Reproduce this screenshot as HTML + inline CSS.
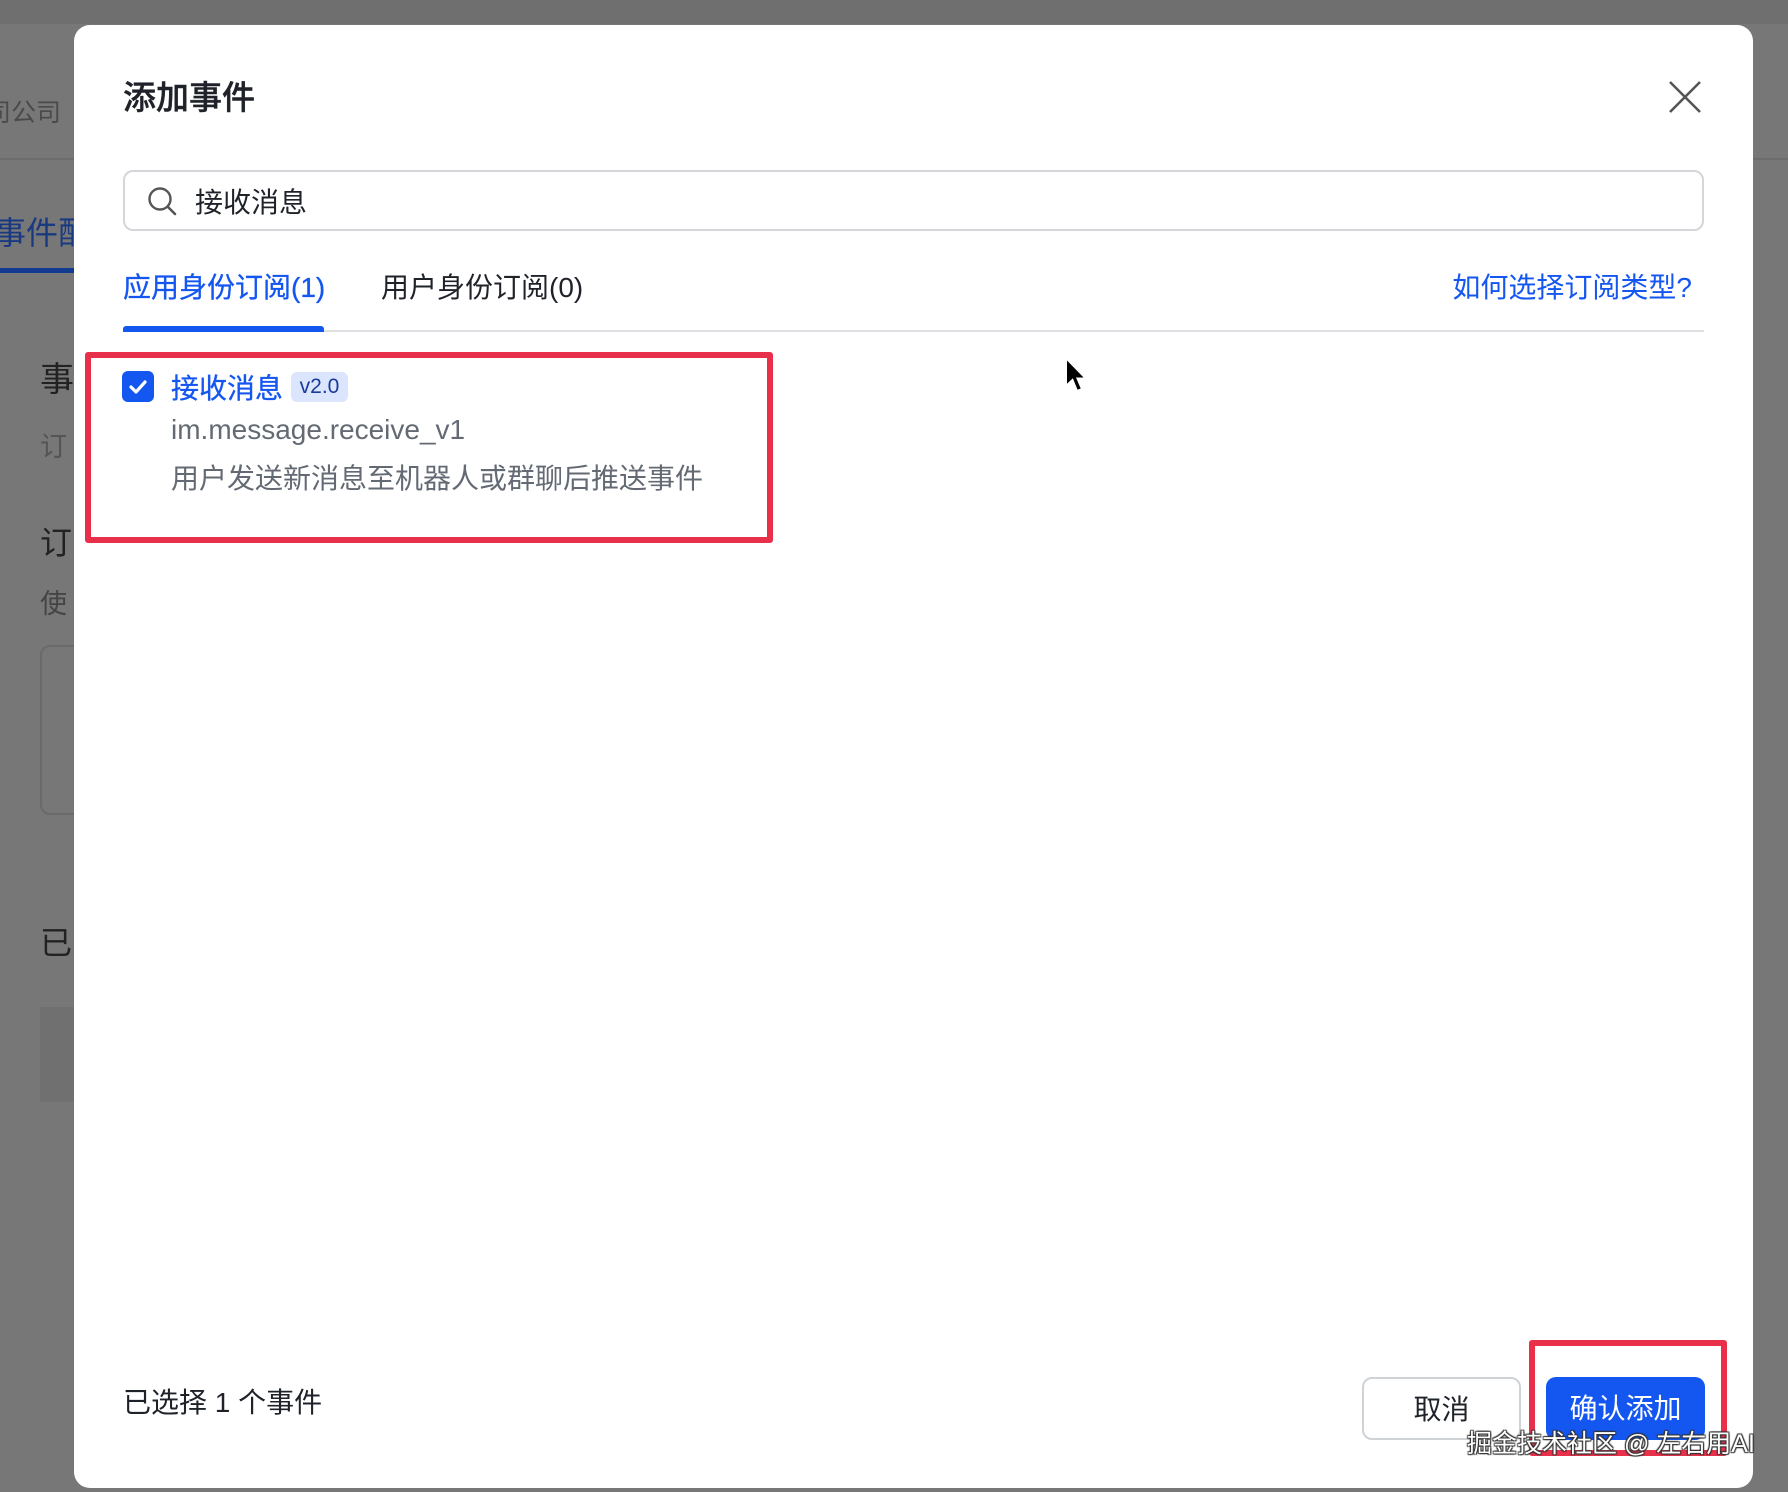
<!DOCTYPE html>
<html><head><meta charset="utf-8"><style>
*{margin:0;padding:0;box-sizing:border-box}
body{width:1788px;height:1492px;overflow:hidden;background:#777;font-family:"Liberation Sans","Noto Sans CJK SC",sans-serif;position:relative}
.a{position:absolute;white-space:nowrap}
</style></head><body>
<div class="a" style="left:0;top:0;width:1788px;height:24px;background:#6f6f6f"></div>
<div class="a" style="left:-14px;top:93px;font-size:25px;color:#4a4a4a">司公司</div>
<div class="a" style="left:0;top:158px;width:1788px;height:2px;background:#6c6c6c"></div>
<div class="a" style="left:-6px;top:208px;font-size:32px;color:#1a3a80">事件配</div>
<div class="a" style="left:0;top:268px;width:80px;height:5px;background:#123a90"></div>
<div class="a" style="left:40px;top:352px;font-size:34px;color:#222">事</div>
<div class="a" style="left:40px;top:425px;font-size:27px;color:#555">订</div>
<div class="a" style="left:40px;top:518px;font-size:32px;color:#222">订</div>
<div class="a" style="left:40px;top:582px;font-size:27px;color:#444">使</div>
<div class="a" style="left:40px;top:645px;width:60px;height:170px;border:2px solid #6a6a6a;border-radius:10px"></div>
<div class="a" style="left:40px;top:918px;font-size:32px;color:#222">已</div>
<div class="a" style="left:40px;top:1007px;width:60px;height:95px;background:#707070"></div>

<div class="a" style="left:74px;top:25px;width:1679px;height:1463px;background:#fff;border-radius:16px"></div>
<div class="a" style="left:123px;top:71px;font-size:33px;color:#1f2329;font-weight:500;-webkit-text-stroke:0.4px #1f2329">添加事件</div>
<svg class="a" style="left:1668px;top:80px" width="34" height="34" viewBox="0 0 34 34"><path d="M2 2L32 32M32 2L2 32" stroke="#555" stroke-width="2.6"/></svg>
<div class="a" style="left:123px;top:170px;width:1581px;height:61px;border:2px solid #d4d6da;border-radius:10px"></div>
<svg class="a" style="left:147px;top:186px" width="30" height="30" viewBox="0 0 30 30"><circle cx="13" cy="13" r="10.5" fill="none" stroke="#555" stroke-width="2.4"/><path d="M21 21L28 28" stroke="#555" stroke-width="2.6" stroke-linecap="round"/></svg>
<div class="a" style="left:195px;top:181px;font-size:28px;color:#1f2329">接收消息</div>
<div class="a" style="left:123px;top:266px;font-size:28px;color:#1456f0;-webkit-text-stroke:0.3px #1456f0">应用身份订阅(1)</div>
<div class="a" style="left:381px;top:266px;font-size:28px;color:#1f2329">用户身份订阅(0)</div>
<div class="a" style="right:96px;top:266px;font-size:28px;color:#1456f0">如何选择订阅类型?</div>
<div class="a" style="left:123px;top:330px;width:1581px;height:2px;background:#dee0e3"></div>
<div class="a" style="left:123px;top:326px;width:201px;height:6px;background:#1456f0;border-radius:3px 3px 0 0"></div>

<div class="a" style="left:85px;top:352px;width:688px;height:191px;border:6px solid #e8304a;border-radius:3px"></div>
<div class="a" style="left:122px;top:371px;width:32px;height:31px;background:#1456f0;border-radius:6px"></div>
<svg class="a" style="left:122px;top:371px" width="32" height="31" viewBox="0 0 32 31"><path d="M9 16L14 21L23 11" fill="none" stroke="#fff" stroke-width="3.2" stroke-linecap="round" stroke-linejoin="round"/></svg>
<div class="a" style="left:171px;top:367px;font-size:28px;color:#1456f0;-webkit-text-stroke:0.3px #1456f0">接收消息</div>
<div class="a" style="left:291px;top:372px;width:57px;height:30px;background:#dbe5fd;border-radius:6px;font-size:21px;line-height:30px;text-align:center;color:#1a3a9a">v2.0</div>
<div class="a" style="left:171px;top:414px;font-size:28px;color:#646a73">im.message.receive_v1</div>
<div class="a" style="left:171px;top:457px;font-size:28px;color:#646a73">用户发送新消息至机器人或群聊后推送事件</div>

<svg class="a" style="left:1064px;top:356px" width="24" height="38" viewBox="0 0 24 38"><path d="M2 2L2 30L8.5 24L13 35L18 33L13.5 22.5L22 22.5Z" fill="#000" stroke="#fff" stroke-width="2"/></svg>

<div class="a" style="left:123px;top:1381px;font-size:28px;color:#1f2329">已选择 1 个事件</div>
<div class="a" style="left:1362px;top:1377px;width:159px;height:63px;border:2px solid #d0d3d6;border-radius:10px;font-size:28px;line-height:61px;text-align:center;color:#1f2329">取消</div>
<div class="a" style="left:1529px;top:1340px;width:198px;height:116px;border:6px solid #e8304a;border-radius:3px"></div>
<div class="a" style="left:1546px;top:1377px;width:159px;height:63px;background:#1456f0;border-radius:10px;font-size:28px;line-height:63px;text-align:center;color:#fff">确认添加</div>
<div class="a" style="left:1467px;top:1424px;font-size:25px;color:#fff;text-shadow:1px 1px 1px #333,-1px -1px 1px #333,1px -1px 1px #333,-1px 1px 1px #333">掘金技术社区 @ 左右用AI</div>
</body></html>
